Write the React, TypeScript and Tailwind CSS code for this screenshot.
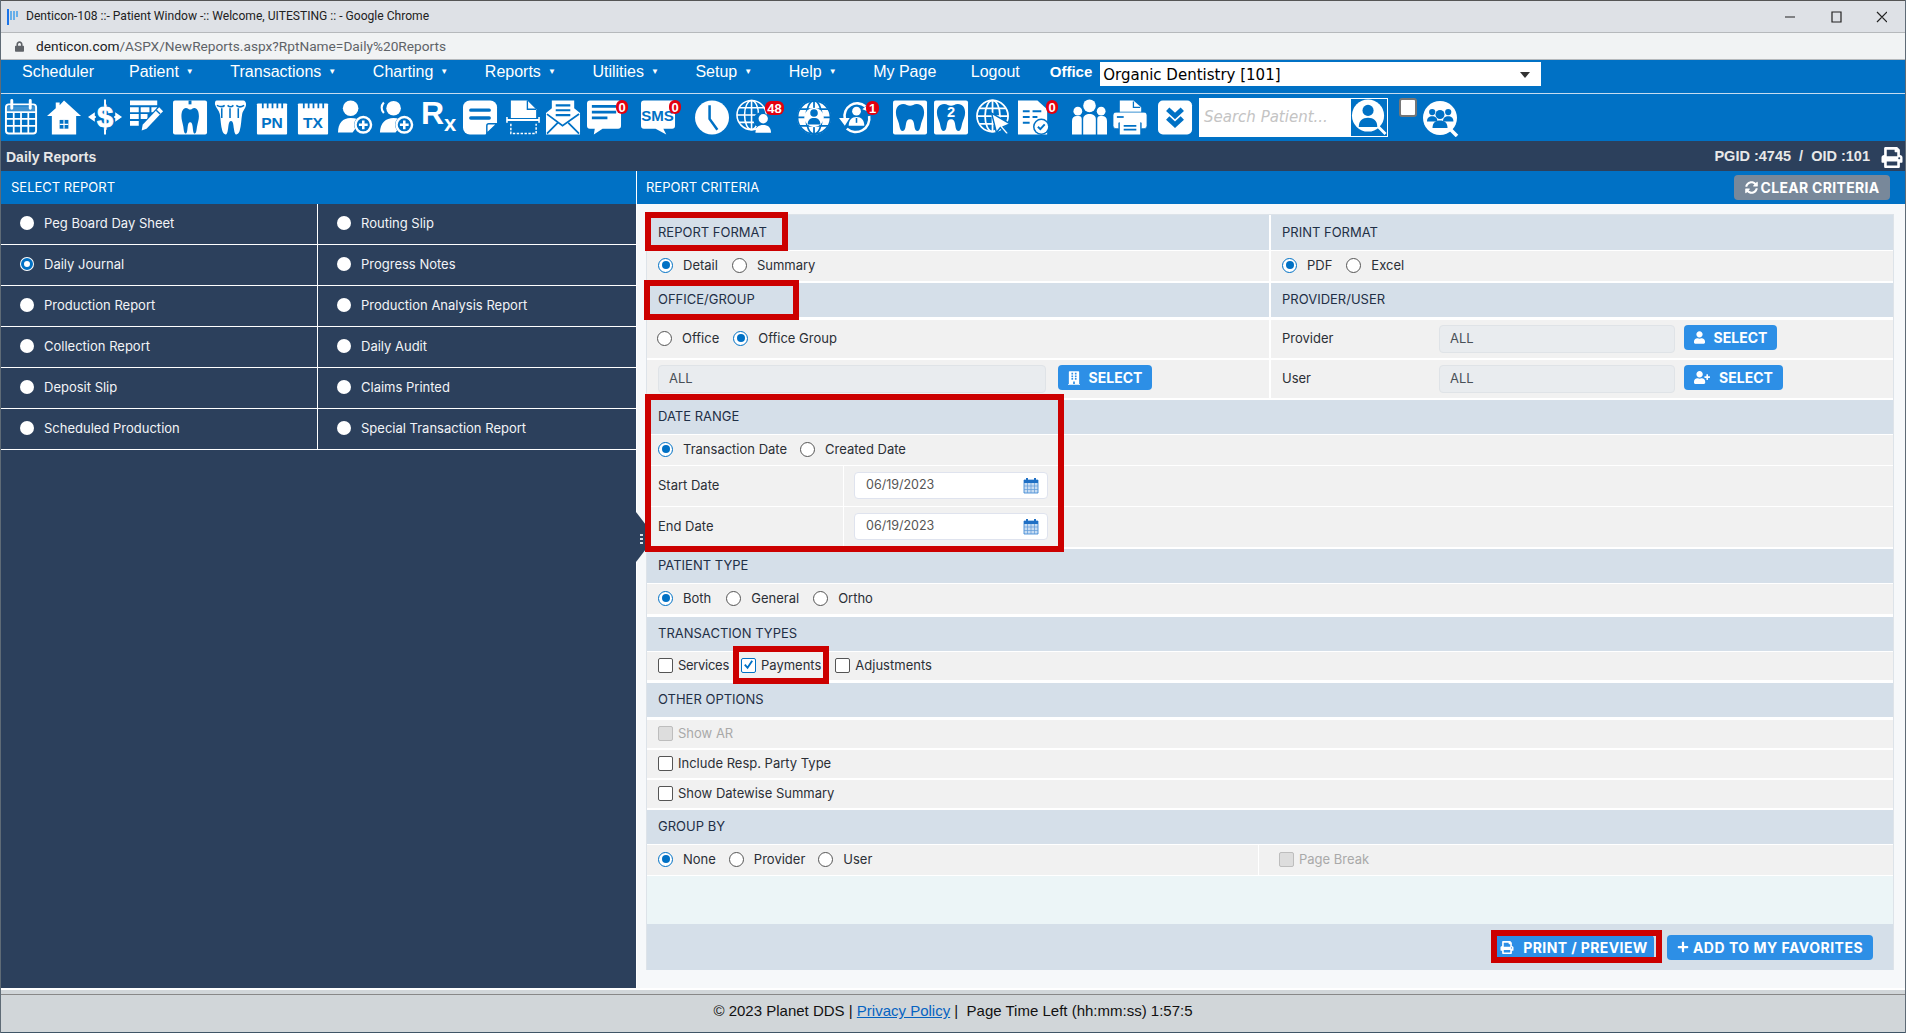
import type { ReactNode } from "react";
import { FaBuilding, FaLock, FaPlus, FaPrint, FaSyncAlt, FaUser, FaUserPlus } from "react-icons/fa";

const BLUE = "#0071c5";
const TOOTH =
  "M11 5c3 0 4.500 1.800 7 1.800S22 5 25 5c5 0 7.500 4 7.500 9 0 4-1.800 6.500-3 11-.8 3-1.200 8-3.800 8-2.900 0-2.900-4-3.700-8-.5-2.300-1.200-4.300-4-4.300s-3.500 2-4 4.300c-.8 4-.8 8-3.700 8-2.600 0-3-5-3.800-8-1.200-4.500-3-7-3-11 0-5 2.500-9 7.500-9z";

function Svg({ children, className = "" }: { children: ReactNode; className?: string }) {
  return (
    <svg viewBox="0 0 36 36" className={`h-[36px] w-[35px] shrink-0 ${className}`}>
      {children}
    </svg>
  );
}

function Badge({ value, className }: { value: string; className: string }) {
  return (
    <span
      className={`absolute flex h-[14px] items-center justify-center rounded-[6px] bg-[#e3000f] px-[2px] font-[Liberation_Sans,sans-serif] text-[13px] font-bold leading-none text-white ${className}`}
    >
      {value}
    </span>
  );
}

function Person({ x, y, s = 1, fill = "#fff" }: { x: number; y: number; s?: number; fill?: string }) {
  return (
    <g transform={`translate(${x} ${y}) scale(${s})`} fill={fill}>
      <circle cx="10" cy="6" r="6" />
      <path d="M0 24c0-7 4-10 10-10s10 3 10 10z" />
    </g>
  );
}

function Globe({ cx, cy, r, color = "#fff", w = 1.6 }: { cx: number; cy: number; r: number; color?: string; w?: number }) {
  return (
    <g fill="none" stroke={color} strokeWidth={w}>
      <circle cx={cx} cy={cy} r={r} />
      <ellipse cx={cx} cy={cy} rx={r * 0.48} ry={r} />
      <path d={`M${cx} ${cy - r}V${cy + r}M${cx - r} ${cy}H${cx + r}`} />
      <path d={`M${cx - r * 0.85} ${cy - r * 0.5}H${cx + r * 0.85}M${cx - r * 0.85} ${cy + r * 0.5}H${cx + r * 0.85}`} />
    </g>
  );
}

function PlusCircle() {
  return (
    <g>
      <circle cx="26" cy="26" r="9.500" fill={BLUE} />
      <circle cx="26" cy="26" r="8" fill="none" stroke="#fff" strokeWidth="2.500" />
      <path d="M26 21.500v9M21.500 26h9" stroke="#fff" strokeWidth="2.600" />
    </g>
  );
}

function CalendarIcon({ label, className }: { label: string; className: string }) {
  return (
    <Svg className={className}>
      <path d="M3 4h29a1 1 0 0 1 1 1v30a1 1 0 0 1-1 1H3a1 1 0 0 1-1-1V5a1 1 0 0 1 1-1z" fill="#fff" />
      <path d="M8 1v8M13 1v8M18 1v8M23 1v8M28 1v8" stroke={BLUE} strokeWidth="1.800" />
      <text x="17.500" y="29" textAnchor="middle" fontFamily="Liberation Sans" fontWeight="700" fontSize="16" fill={BLUE}>
        {label}
      </text>
    </Svg>
  );
}

function Toolbar() {
  return (
    <div className="flex h-[47px] items-start bg-[#0071c5] pl-[3px] pt-[5px]">
      <Svg>
        <rect x="2" y="5" width="31" height="30" rx="3" fill="none" stroke="#fff" strokeWidth="2" />
        <path d="M2 12h31V7H2z" fill="#fff" opacity=".25" />
        <path d="M8 1v8M27 1v8" stroke="#fff" strokeWidth="3" strokeLinecap="round" />
        <path d="M2 13h31M2 20h31M2 27h31M10 13v22M17.500 13v22M25 13v22" stroke="#fff" strokeWidth="1.800" />
      </Svg>
      <Svg className="ml-[8px]">
        <path d="M17.500 1 35 17h-5v19H5V17H0L9 9V3h4v3z" fill="#fff" />
        <path d="M13 21h9v9h-9z" fill={BLUE} />
        <path d="M17.500 21v9M13 25.500h9" stroke="#fff" strokeWidth="1.200" />
      </Svg>
      <Svg className="ml-[6px]">
        <path d="M0 18l7-5v10zM35 18l-7-5v10z" fill="#fff" />
        <path d="M3 18h5M27 18h5M17.500 0v6M17.500 30v6" stroke="#fff" strokeWidth="2" />
        <text x="17.500" y="28" textAnchor="middle" fontFamily="Liberation Sans" fontWeight="700" fontSize="30" fill="#fff" stroke="#fff" strokeWidth=".8">
          $
        </text>
      </Svg>
      <Svg className="ml-[7px]">
        <path d="M0 1h28v5H0zM0 8h9v5H0zM11 8h9v5h-9zM22 8h6v5h-6zM0 15h9v5H0zM11 15h7v5h-7zM0 22h9v5H0z" fill="#fff" />
        <path d="m30 6 6 5-19 21-8 3 2-8z" fill={BLUE} />
        <path d="m30 8 4 4-17 18-5 2 1-6z" fill="#fff" />
        <path d="m27 11 4 4" stroke={BLUE} strokeWidth="1.400" />
      </Svg>
      <Svg className="ml-[8px]">
        <rect x="0" y="1" width="35" height="35" rx="2" fill="#fff" />
        <path d="M16 1h3v4h-3z" fill={BLUE} />
        <path d={TOOTH} fill={BLUE} transform="translate(6.500 4) scale(.62 .94)" />
      </Svg>
      <Svg className="ml-[5px]">
        <path d="M4 1h27c2 0 3 2 3 4 0 4-3 6-4 10-1 6-1 12-2.500 17-.5 2-2 4-3.500 4s-2-3-2.500-6c-.5-3-.5-8-3-8s-2.500 5-3 8c-.5 3-1 6-2.500 6S10 34 9.500 32C8 27 8 21 7 15 6 11 3 9 2 5c0-2 0-4 2-4z" fill="#fff" />
        <path d="M4 6c4 2 6 2 8 0M15 6c2 2 4 2 6 0M24 6c2 2 5 2 8 0M9 9v10M17.500 9v10M26 9v10" fill="none" stroke={BLUE} strokeWidth="1.600" />
      </Svg>
      <CalendarIcon label="PN" className="ml-[7px]" />
      <CalendarIcon label="TX" className="ml-[6px]" />
      <Svg className="ml-[7px]">
        <circle cx="13" cy="9" r="8" fill="#fff" />
        <path d="M0 34c0-10 5-15 13-15 5 0 8 1 10 4l-8 11z" fill="#fff" />
        <PlusCircle />
      </Svg>
      <Svg className="ml-[6px]">
        <circle cx="15" cy="9" r="7.500" fill="#fff" />
        <path d="M1 34c0-10 6-15 14-15 5 0 8 1 10 4l-8 11z" fill="#fff" />
        <path d="M5 3C2 6 2 11 5 14" fill="none" stroke="#fff" strokeWidth="2.200" />
        <PlusCircle />
      </Svg>
      <div className="-mt-[2px] ml-[7px] flex h-[36px] w-[35px] shrink-0 items-baseline whitespace-nowrap font-[Liberation_Sans,sans-serif] font-bold leading-none text-white">
        <span className="text-[32px]">R</span>
        <span className="relative top-[7px] text-[22px]">x</span>
      </div>
      <Svg className="ml-[7px]">
        <path d="M7 1h21a7 7 0 0 1 7 7v16L23 36H7a7 7 0 0 1-7-7V8a7 7 0 0 1 7-7z" fill="#fff" />
        <path d="M8 11h19M8 19h19" stroke={BLUE} strokeWidth="3.400" strokeLinecap="round" />
        <path d="M24.500 35V27a2 2 0 0 1 2-2H35z" fill="#fff" stroke={BLUE} strokeWidth="1.500" />
      </Svg>
      <Svg className="ml-[8px]">
        <path d="M5 1h17l9 9v9H5z" fill="#fff" />
        <path d="M22 1v9h9" fill="none" stroke={BLUE} strokeWidth="1.400" />
        <path d="M1 21h33" stroke="#fff" strokeWidth="2" />
        <path d="M1 18v6M34 18v6" stroke="#fff" strokeWidth="1.600" />
        <path d="M5 25v10h26V25" fill="none" stroke="#fff" strokeWidth="1.500" strokeDasharray="2.500 1.500" />
      </Svg>
      <Svg className="ml-[5px]">
        <path d="M0 14 6 9V1h23v8l6 5v22H0z" fill="#fff" />
        <path d="M10 6h15M10 11h15M10 16h15" stroke={BLUE} strokeWidth="2.200" />
        <path d="M1 15l16 12 17-12M1 35l11-11M34 35 23 24" fill="none" stroke={BLUE} strokeWidth="1.800" />
      </Svg>
      <div className="relative ml-[6px] h-[36px] w-[35px] shrink-0">
        <Svg>
          <path d="M3 1h29a3 3 0 0 1 3 3v23a3 3 0 0 1-3 3H16l-9 6 1-6H3a3 3 0 0 1-3-3V4a3 3 0 0 1 3-3z" fill="#fff" />
          <path d="M5 7h25M5 13h25M5 19h16" stroke={BLUE} strokeWidth="2.800" />
        </Svg>
        <Badge value="0" className="left-[29px] top-[1px] w-[12px]" />
      </div>
      <div className="relative ml-[19px] h-[36px] w-[35px] shrink-0">
        <Svg>
          <path d="M3 1h29a3 3 0 0 1 3 3v23a3 3 0 0 1-3 3h-9l3 6-11-6H3a3 3 0 0 1-3-3V4a3 3 0 0 1 3-3z" fill="#fff" />
          <text x="17" y="22" textAnchor="middle" fontFamily="Liberation Sans" fontWeight="700" fontSize="15.500" fill={BLUE}>
            SMS
          </text>
        </Svg>
        <Badge value="0" className="left-[28px] top-[1px] w-[12px]" />
      </div>
      <Svg className="ml-[19px]">
        <circle cx="17.500" cy="18.500" r="17.500" fill="#fff" />
        <path d="M15 6v14l8 11" fill="none" stroke={BLUE} strokeWidth="2.600" />
      </Svg>
      <div className="relative ml-[6px] h-[36px] w-[35px] shrink-0">
        <Svg>
          <Globe cx={16} cy={16} r={15} />
          <circle cx="26" cy="21" r="8" fill={BLUE} />
          <Person x={20} y={15} s={0.8} />
        </Svg>
        <Badge value="48" className="left-[29px] top-[2px] w-[19px]" />
      </div>
      <Svg className="ml-[26px]">
        <circle cx="17.500" cy="18.500" r="17.500" fill="#fff" />
        <Globe cx={17.500} cy={18.500} r={17} color={BLUE} w={1.800} />
        <circle cx="17.500" cy="18.500" r="10" fill="#fff" />
        <Person x={11} y={10} s={0.65} fill={BLUE} />
      </Svg>
      <div className="relative ml-[7px] h-[36px] w-[35px] shrink-0">
        <Svg>
          <path d="M6 20A13 13 0 0 1 27 7" fill="none" stroke="#fff" strokeWidth="2.600" />
          <path d="M31 17a14 14 0 0 1-23 13" fill="none" stroke="#fff" strokeWidth="2.600" />
          <path d="M0 19h11l-5 8zM31 4l1 9-8-3z" fill="#fff" />
          <circle cx="18" cy="12" r="4.500" fill="#fff" />
          <path d="M10 27c0-6 3-9 8-9s8 3 8 9z" fill="#fff" />
          <path d="M18 19v5" stroke={BLUE} strokeWidth="1.600" />
        </Svg>
        <Badge value="1" className="left-[27px] top-[2px] w-[13px]" />
      </div>
      <Svg className="ml-[19px]">
        <rect x="0" y="1" width="35" height="35" rx="2" fill="#fff" />
        <path d={TOOTH} fill={BLUE} transform="translate(-.5 -.5)" />
      </Svg>
      <Svg className="ml-[6px]">
        <rect x="0" y="1" width="35" height="35" rx="2" fill="#fff" />
        <path d={TOOTH} fill={BLUE} transform="translate(-.5 -.5)" />
        <text x="17.500" y="18" textAnchor="middle" fontFamily="Liberation Sans" fontWeight="700" fontSize="15" fill="#fff">
          2
        </text>
      </Svg>
      <Svg className="ml-[7px]">
        <Globe cx={17} cy={17} r={16} w={1.800} />
        <path d="M16 14 35 25l-7 3 6 7-3 1-6-7-4 5z" fill="#fff" stroke={BLUE} strokeWidth="1.500" />
      </Svg>
      <div className="relative ml-[6px] h-[36px] w-[35px] shrink-0">
        <Svg>
          <path d="M1 1h20l10 9v26H1z" fill="#fff" />
          <path d="M6 12h7M16 12h9M6 18h7M16 18h5M6 24h7" stroke={BLUE} strokeWidth="2" />
          <circle cx="25" cy="28" r="8.500" fill={BLUE} />
          <circle cx="25" cy="28" r="7" fill="#fff" />
          <path d="m21.500 28 2.500 2.500 4.500-5" fill="none" stroke={BLUE} strokeWidth="2" />
        </Svg>
        <Badge value="0" className="left-[29px] top-[1px] w-[12px]" />
      </div>
      <Svg className="ml-[20px]">
        <circle cx="18" cy="6.500" r="6.500" fill="#fff" />
        <circle cx="6" cy="12" r="4.500" fill="#fff" />
        <circle cx="30" cy="12" r="4.500" fill="#fff" />
        <path d="M0 36V22c0-3 2-5 5-5h2c2 0 3 1 3 3v16zM26 36V20c0-2 1-3 3-3h2c3 0 5 2 5 5v14z" fill="#fff" />
        <path d="M11.500 36V20c0-3 3-5 6.500-5s6.500 2 6.500 5v16z" fill="#fff" />
      </Svg>
      <Svg className="ml-[6px]">
        <path d="M7 1h14l8 7v7H7z" fill="#fff" />
        <path d="M21 2v6h7" fill="none" stroke={BLUE} strokeWidth="1.300" />
        <path d="M3 13h29a3 3 0 0 1 3 3v11a3 3 0 0 1-3 3h-3v-6H6v6H3a3 3 0 0 1-3-3V16a3 3 0 0 1 3-3z" fill="#fff" stroke={BLUE} strokeWidth=".8" />
        <path d="M7 23h21v13H7z" fill="#fff" />
        <path d="M11 27h13M11 31h13" stroke={BLUE} strokeWidth="1.800" />
        <path d="M4 18h7" stroke={BLUE} strokeWidth="1.800" />
      </Svg>
      <Svg className="ml-[10px]">
        <rect x="0" y="1" width="35" height="35" rx="5" fill="#fff" />
        <path d="m10 10 7.500 7 7.500-7M10 19l7.500 7 7.500-7" fill="none" stroke={BLUE} strokeWidth="5" />
      </Svg>
      <div className="ml-[6px] flex h-[39px] w-[189px] shrink-0 -translate-y-[1px] items-center border border-white bg-white">
        <span className="flex-1 pl-[4px] font-[DejaVu_Sans,sans-serif] text-[15px] italic text-[#c4c4c4]">Search Patient...</span>
        <svg viewBox="0 0 36 38" className="h-[37px] w-[36px] shrink-0 bg-[#0071c5]">
          <circle cx="17" cy="17" r="16.500" fill="#fff" />
          <path d="m27 28 8 8" stroke="#fff" strokeWidth="3" />
          <Person x={7.500} y={6} s={0.95} fill={BLUE} />
        </svg>
      </div>
      <span className="ml-[11px] mt-[-1px] h-[19px] w-[18px] shrink-0 rounded-[3px] border-2 border-[#767676] bg-white" />
      <svg viewBox="0 0 36 36" className="ml-[6px] mt-[2px] h-[36px] w-[36px] shrink-0">
        <circle cx="17" cy="17" r="17" fill="#fff" />
        <path d="m27 28 7 7" stroke="#fff" strokeWidth="3.500" />
        <Person x={4} y={8} s={0.52} fill={BLUE} />
        <Person x={20} y={8} s={0.52} fill={BLUE} />
        <Person x={9.500} y={9} s={0.75} fill={BLUE} />
      </svg>
    </div>
  );
}

function NavItem({ label, caret = true, className = "" }: { label: string; caret?: boolean; className?: string }) {
  return (
    <div className={`flex items-center ${className}`}>
      <span>{label}</span>
      {caret && <span className="ml-[7px] w-[7px] text-[8px] leading-none">▼</span>}
    </div>
  );
}

function Radio({ on = false, label, className = "" }: { on?: boolean; label: string; className?: string }) {
  return (
    <label className={`flex items-center ${className}`}>
      <span
        className={`-mt-[2px] flex h-[15px] w-[15px] shrink-0 items-center justify-center rounded-full border bg-white ${on ? "border-[#0071c5]" : "border-[#555555]"}`}
      >
        {on && <span className="h-[8px] w-[8px] rounded-full bg-[#0071c5]" />}
      </span>
      <span className="ml-[10px]">{label}</span>
    </label>
  );
}

function Check({ on = false, off = false, label, className = "" }: { on?: boolean; off?: boolean; label: string; className?: string }) {
  return (
    <label className={`flex items-center ${className} ${off ? "text-[#a9a9a9]" : ""}`}>
      <span
        className={`-mt-[2px] flex h-[15px] w-[15px] shrink-0 items-center justify-center rounded-[2px] border ${
          on ? "border-[#0071c5] bg-white" : off ? "border-[#bdbdbd] bg-[#dddddd]" : "border-[#555555] bg-white"
        }`}
      >
        {on && (
          <svg viewBox="0 0 14 14" className="h-[13px] w-[13px]">
            <path d="m3 6 3 3.500L11 2" fill="none" stroke="#0071c5" strokeWidth="2" />
          </svg>
        )}
      </span>
      <span className="ml-[5px]">{label}</span>
    </label>
  );
}

function Head({ title, className = "" }: { title: string; className?: string }) {
  return <div className={`flex h-[34px] items-center bg-[#d5dfe9] pl-[11px] text-[#1f2f46] ${className}`}>{title}</div>;
}

function Row({ children, className = "" }: { children: ReactNode; className?: string }) {
  return <div className={`flex items-center bg-[#f1f1f1] pl-[11px] ${className}`}>{children}</div>;
}

function SelectBtn({ icon, className }: { icon: ReactNode; className: string }) {
  return (
    <button className={`flex h-[25px] items-center justify-center gap-[9px] rounded-[4px] bg-[#2d8fe6] text-[14px] font-bold text-white ${className}`}>
      {icon}
      SELECT
    </button>
  );
}

function ReadOnly({ className }: { className: string }) {
  return (
    <div className={`flex h-[28px] items-center rounded-[4px] border border-[#dfe3e7] bg-[#e9ecef] pl-[10px] text-[#495057] ${className}`}>
      ALL
    </div>
  );
}

function DateRow({ label, className = "" }: { label: string; className?: string }) {
  return (
    <div className={`flex h-[40px] bg-[#f1f1f1] ${className}`}>
      <div className="flex w-[197px] items-center border-r border-white pl-[11px]">{label}</div>
      <div className="ml-[10px] mt-[6px] flex h-[27px] w-[194px] items-center justify-between rounded-[4px] border border-[#dfe3ee] bg-white pl-[11px] pr-[8px] text-[12.500px] text-[#555555]">
        06/19/2023
        <svg viewBox="0 0 16 17" className="h-[17px] w-[16px]">
          <path d="M1 3h14v13H1z" fill="#c7dcf2" stroke="#2f7fd0" strokeWidth=".8" />
          <path d="M1 3h14v3H1z" fill="#1f6fc4" />
          <path d="M4 1v4M12 1v4" stroke="#1f6fc4" strokeWidth="2" />
          <path d="M1 9h14M1 12.500h14M4.500 6v10M8 6v10M11.500 6v10" stroke="#5f9ad8" strokeWidth=".7" />
        </svg>
      </div>
    </div>
  );
}

const REPORTS = [
  ["Peg Board Day Sheet", "Routing Slip"],
  ["Daily Journal", "Progress Notes"],
  ["Production Report", "Production Analysis Report"],
  ["Collection Report", "Daily Audit"],
  ["Deposit Slip", "Claims Printed"],
  ["Scheduled Production", "Special Transaction Report"],
];

function ReportCell({ label, on, className = "" }: { label: string; on?: boolean; className?: string }) {
  return (
    <div className={`flex items-center pl-[19px] ${className}`}>
      <span className="-mt-[2px] flex h-[14px] w-[14px] shrink-0 items-center justify-center rounded-full bg-white">
        {on && <span className="h-[12px] w-[12px] rounded-full border-[3px] border-[#0071c5] bg-white" />}
      </span>
      <span className="ml-[10px]">{label}</span>
    </div>
  );
}

function RedBox({ className }: { className: string }) {
  return <div className={`pointer-events-none absolute border-[6px] border-[#cc0000] ${className}`} />;
}

export default function App() {
  return (
    <div className="flex h-screen w-full flex-col overflow-hidden border-x border-[#5f6b76] bg-white font-[Inter,sans-serif] text-[13px] text-[#2b2f36]">
      {/* Chrome window */}
      <div className="flex h-[32px] items-center border-t border-[#555555] bg-[#dee1e6] pl-[6px] pr-[18px] font-[Roboto,sans-serif] text-[12.100px] text-[#222222]">
        <svg viewBox="0 0 13 16" className="h-[16px] w-[13px]">
          <path d="M1 0v16" stroke="#1a73e8" strokeWidth="2" />
          <path d="M4 2v9M7 2v9M10 2v6" stroke="#4aa3ea" strokeWidth="1.600" />
        </svg>
        <span className="ml-[6px] flex-1">Denticon-108 ::- Patient Window -:: Welcome, UITESTING :: - Google Chrome</span>
        <svg viewBox="0 0 102 12" className="h-[12px] w-[102px]" fill="none" stroke="#222222" strokeWidth="1.200">
          <path d="M0 6h10M47 1h9v10h-9zM92 1l10 10M102 1 92 11" />
        </svg>
      </div>
      <div className="flex h-[28px] items-center border-y border-[#b6b9bc] bg-[#f1f3f4] pl-[14px] font-[Roboto,sans-serif] text-[13.700px] text-[#5f6368]">
        <FaLock className="h-[11px] w-[9px] text-[#5f6368]" />
        <span className="ml-[12px]">
          <span className="text-[#202124]">denticon.com</span>/ASPX/NewReports.aspx?RptName=Daily%20Reports
        </span>
      </div>

      {/* App menu */}
      <div className="flex h-[34px] items-start border-b border-[#c6dcf0] bg-[#0071c5] pl-[21px] pt-[2px] font-[Liberation_Sans,sans-serif] text-[16px] text-white">
        <div className="-mt-[2px] flex gap-[37.500px]">
          <NavItem label="Scheduler" caret={false} />
          <NavItem label="Patient" className="-ml-[2.500px]" />
          <NavItem label="Transactions" />
          <NavItem label="Charting" />
          <NavItem label="Reports" />
          <NavItem label="Utilities" />
          <NavItem label="Setup" />
          <NavItem label="Help" />
          <NavItem label="My Page" caret={false} />
          <NavItem label="Logout" caret={false} className="-ml-[3px]" />
        </div>
        <span className="-mt-[2px] ml-[30px] text-[15px] font-bold leading-[24px]">Office</span>
        <div className="ml-[8px] flex h-[24px] w-[441px] items-center justify-between bg-white pl-[3px] pr-[11px] pt-[2px] font-[DejaVu_Sans,sans-serif] text-[15px] text-black">
          Organic Dentistry [101]
          <span className="h-0 w-0 border-x-[5px] border-t-[6px] border-x-transparent border-t-[#333333]" />
        </div>
      </div>
      <Toolbar />

      {/* Page title */}
      <div className="flex h-[30px] items-center justify-between bg-[#2c405c] pl-[5px] pr-[2px] pt-[2px] font-[Liberation_Sans,sans-serif] text-[14px] font-bold text-[#e8e8e8]">
        Daily Reports
        <div className="flex items-center">
          <span className="whitespace-pre text-[14.500px]">PGID :4745  /  OID :101</span>
          <FaPrint className="ml-[11px] h-[21px] w-[22px] text-white" />
        </div>
      </div>

      <div className="flex min-h-0 flex-1">
        {/* Select report */}
        <div className="flex w-[635px] shrink-0 flex-col bg-[#2c405c] text-[#f2f4f7]">
          <div className="flex h-[33px] items-center bg-[#0071c5] pl-[10px] text-white">SELECT REPORT</div>
          {REPORTS.map(([left, right], i) => (
            <div key={left} className="flex h-[41px] border-b border-white">
              <ReportCell label={left} on={i === 1} className="w-[317px] border-r border-white" />
              <ReportCell label={right} className="flex-1" />
            </div>
          ))}
        </div>

        {/* Report criteria */}
        <div className="relative flex-1 border-l border-white bg-[#f6f8fa]">
          <div className="flex h-[33px] items-center justify-between bg-[#0071c5] pl-[9px] pr-[15px] text-white">
            REPORT CRITERIA
            <button className="flex h-[25px] w-[156px] items-center justify-center gap-[3px] rounded-[4px] bg-[#78889a] text-[14px] font-bold tracking-[0.3px] text-white">
              <FaSyncAlt className="h-[13px] w-[13px]" />
              CLEAR CRITERIA
            </button>
          </div>

          <div className="ml-[9px] mr-[11px] mt-[10px] border-x border-t border-[#dde3e9] bg-white">
            <div className="flex gap-[2px]">
              <div className="w-[622px]">
                <Head title="REPORT FORMAT" className="h-[35px]" />
                <Row className="mt-px h-[30px]">
                  <Radio on label="Detail" />
                  <Radio label="Summary" className="ml-[14px]" />
                </Row>
                <Head title="OFFICE/GROUP" className="mt-[2px]" />
                <Row className="mt-[3px] h-[38px]">
                  <Radio label="Office" className="-ml-px" />
                  <Radio on label="Office Group" className="ml-[14px]" />
                </Row>
                <Row className="mt-[2px] h-[38px] !items-start pt-[5px]">
                  <ReadOnly className="w-[388px]" />
                  <SelectBtn icon={<FaBuilding className="h-[14px] w-[12px]" />} className="ml-[12px] w-[94px]" />
                </Row>
              </div>
              <div className="w-[622px]">
                <Head title="PRINT FORMAT" className="h-[35px]" />
                <Row className="mt-px h-[30px]">
                  <Radio on label="PDF" />
                  <Radio label="Excel" className="ml-[14px]" />
                </Row>
                <Head title="PROVIDER/USER" className="mt-[2px]" />
                <Row className="mt-[3px] h-[38px] pt-[5px] !items-start">
                  <span className="mt-[4px] w-[157px]">Provider</span>
                  <ReadOnly className="w-[236px]" />
                  <SelectBtn icon={<FaUser className="h-[13px] w-[11px]" />} className="ml-[9px] w-[93px]" />
                </Row>
                <Row className="mt-[2px] h-[38px] pt-[5px] !items-start">
                  <span className="mt-[4px] w-[157px]">User</span>
                  <ReadOnly className="w-[236px]" />
                  <SelectBtn icon={<FaUserPlus className="h-[13px] w-[16px]" />} className="ml-[9px] w-[99px]" />
                </Row>
              </div>
            </div>

            <Head title="DATE RANGE" className="mt-[2px]" />
            <Row className="mt-px h-[30px]">
              <Radio on label="Transaction Date" />
              <Radio label="Created Date" className="ml-[13px]" />
            </Row>
            <DateRow label="Start Date" className="mt-px" />
            <DateRow label="End Date" className="mt-px" />

            <Head title="PATIENT TYPE" className="mt-[2px]" />
            <Row className="mt-px h-[30px]">
              <Radio on label="Both" />
              <Radio label="General" className="ml-[15px]" />
              <Radio label="Ortho" className="ml-[14px]" />
            </Row>

            <Head title="TRANSACTION TYPES" className="mt-[3px]" />
            <Row className="mt-px h-[28px]">
              <Check label="Services" className="w-[73px] tracking-[-0.3px]" />
              <Check on label="Payments" className="ml-[10px]" />
              <Check label="Adjustments" className="ml-[14px]" />
            </Row>

            <Head title="OTHER OPTIONS" className="mt-[3px]" />
            <Row className="mt-[3px] h-[28px]">
              <Check off label="Show AR" />
            </Row>
            <Row className="mt-[2px] h-[28px]">
              <Check label="Include Resp. Party Type" />
            </Row>
            <Row className="mt-[2px] h-[28px]">
              <Check label="Show Datewise Summary" />
            </Row>

            <Head title="GROUP BY" className="mt-[2px]" />
            <div className="mt-px flex h-[30px] bg-[#f1f1f1]">
              <div className="flex w-[612px] items-center border-r border-white pl-[11px]">
                <Radio on label="None" />
                <Radio label="Provider" className="ml-[13px]" />
                <Radio label="User" className="ml-[13px]" />
              </div>
              <div className="flex items-center pl-[20px]">
                <Check off label="Page Break" />
              </div>
            </div>

            <div className="mt-px h-[48px] bg-[#ecf5f7]" />
            <div className="flex h-[46px] items-center justify-end bg-[#d5dfe9] pr-[20px]">
              <button className="flex h-[25px] w-[160px] items-center justify-center gap-[9px] rounded-[4px] bg-[#2d8fe6] text-[14px] font-bold tracking-[0.4px] text-white">
                <FaPrint className="h-[13px] w-[14px]" />
                PRINT / PREVIEW
              </button>
              <button className="ml-[13px] flex h-[25px] w-[206px] items-center justify-center gap-[4px] rounded-[4px] bg-[#2d8fe6] text-[14px] font-bold tracking-[0.5px] text-white">
                <FaPlus className="h-[12px] w-[12px]" />
                ADD TO MY FAVORITES
              </button>
            </div>
          </div>

          {/* Drawer handle */}
          <svg viewBox="0 0 11 50" className="absolute -left-px top-[341px] h-[50px] w-[11px]">
            <path d="M0 0 10 13v24L0 50z" fill="#2c405c" />
            <path d="M4 22h3v2H4zM4 26h3v2H4zM4 30h3v2H4z" fill="#d5dfe9" />
          </svg>

          {/* Annotation boxes */}
          <RedBox className="left-[8px] top-[41px] h-[39px] w-[143px]" />
          <RedBox className="left-[7px] top-[109px] h-[40px] w-[155px]" />
          <RedBox className="left-[8px] top-[223px] h-[158px] w-[419px]" />
          <RedBox className="left-[96px] top-[475px] h-[38px] w-[96px]" />
          <RedBox className="left-[854px] top-[759px] h-[33px] w-[171px]" />
        </div>
      </div>

      {/* Footer */}
      <div className="h-[2px] bg-white" />
      <div className="h-[5px] border-b border-[#888888] bg-[#d1d6d9]" />
      <div className="flex h-[38px] items-center justify-center border-b border-[#3f5566] bg-[#d1d6d9] pb-[4px] font-[Liberation_Sans,sans-serif] text-[15px] text-[#111111]">
        <span className="whitespace-pre">
          © 2023 Planet DDS | <a className="text-[#0563c1] underline">Privacy Policy</a> |  Page Time Left (hh:mm:ss) 1:57:5
        </span>
      </div>
    </div>
  );
}
